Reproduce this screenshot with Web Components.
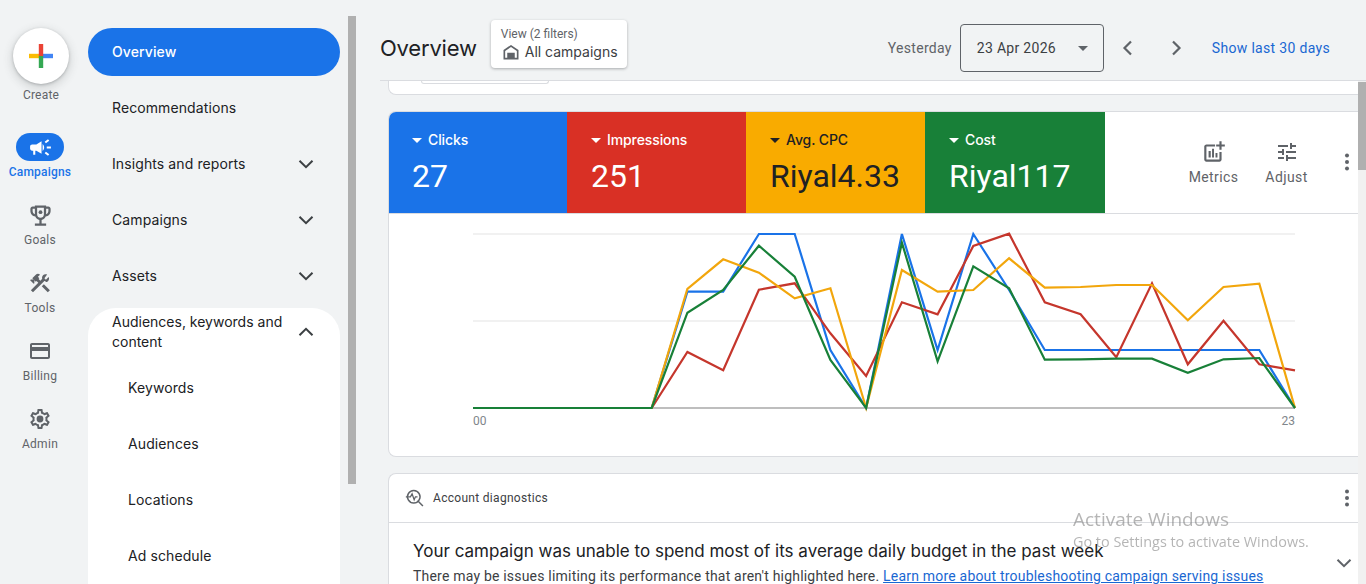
<!DOCTYPE html>
<html>
<head>
<meta charset="utf-8">
<title>Overview</title>
<style>
  html, body { margin: 0; height: 100%; overflow: hidden; background: #f1f3f4; }
  body { font-family: Roboto, "Liberation Sans", sans-serif; color: #202124; }
</style>
</head>
<body>
<ads-app>
  <ads-rail slot="rail">
    <rail-item label="Goals" icon="goals" size="27"></rail-item>
    <rail-item label="Tools" icon="tools"></rail-item>
    <rail-item label="Billing" icon="billing"></rail-item>
    <rail-item label="Admin" icon="admin"></rail-item>
  </ads-rail>
  <ads-nav slot="nav"></ads-nav>
  <page-header slot="header"></page-header>
  <stub-card slot="content"></stub-card>
  <score-card slot="content">
    <metric-tile label="Clicks" value="27" color="#1a73e8" w="178" pad="23"></metric-tile>
    <metric-tile label="Impressions" value="251" color="#d93025"></metric-tile>
    <metric-tile label="Avg. CPC" value="Riyal4.33" color="#f9ab00" dark></metric-tile>
    <metric-tile label="Cost" value="Riyal117" color="#188038" w="180"></metric-tile>
  </score-card>
  <diag-card slot="content"></diag-card>
</ads-app>
<win-watermark></win-watermark>

<script>
// material style icon paths, all on a 24 box
const ICONS = {
  campaigns: '<path d="M18 11v2h4v-2h-4zm-2 6.61c.96.71 2.21 1.65 3.2 2.39.4-.53.8-1.07 1.2-1.6-.99-.74-2.24-1.68-3.2-2.4-.4.54-.8 1.08-1.2 1.61zM20.4 5.6c-.4-.53-.8-1.07-1.2-1.6-.99.74-2.24 1.68-3.2 2.4.4.53.8 1.07 1.2 1.6.96-.72 2.21-1.65 3.2-2.4zM4 9c-1.1 0-2 .9-2 2v2c0 1.1.9 2 2 2h1v4h2v-4h1l5 3V6L8 9H4zm11.5 3c0-1.33-.58-2.53-1.5-3.35v6.69c.92-.81 1.5-2.01 1.5-3.34z"/>',
  goals: '<path fill-rule="evenodd" d="M19 4h-2V3H7v1H5C3.9 4 3 4.9 3 6v2c0 2.55 1.92 4.63 4.39 4.94.63 1.5 1.98 2.63 3.61 2.96V19H7v2h10v-2h-4v-3.1c1.63-.33 2.98-1.46 3.61-2.96C19.08 12.63 21 10.55 21 8V6c0-1.1-.9-2-2-2zM5 8V6h2v4.82C5.84 10.4 5 9.3 5 8zm7 6c-1.65 0-3-1.35-3-3V5h6v6c0 1.65-1.35 3-3 3zm7-6c0 1.3-.84 2.4-2 2.82V6h2v2z"/><circle cx="12" cy="9" r="1.7"/>',
  tools: '<path d="M13.78 15.3l6 6 2.11-2.16-6-6z"/><path d="M17.5 10.1c-.39 0-.81-.05-1.12-.18L5 21.3l-2.11-2.11 7.41-7.4L8.53 10l-.71.7-1.45-1.41v2.86l-.7.7-3.54-3.54.71-.7h2.81L4.25 7.2l3.54-3.54c1.17-1.17 3.07-1.17 4.24 0L9.91 5.78l1.41 1.41-.71.71 1.79 1.79 1.82-1.88c-.13-.31-.19-.73-.19-1.12 0-1.99 1.57-3.54 3.5-3.54.59 0 1.11.14 1.58.42L16.41 7.3l1.5 1.5 2.72-2.68c.28.47.42.97.42 1.58 0 1.93-1.55 3.4-3.55 3.4z"/>',
  billing: '<path d="M20 4H4c-1.11 0-1.99.89-1.99 2L2 18c0 1.11.89 2 2 2h16c1.11 0 2-.89 2-2V6c0-1.11-.89-2-2-2zm0 14H4v-6h16v6zm0-10H4V6h16v2z"/>',
  admin: '<path d="M19.43 12.98c.04-.32.07-.64.07-.98 0-.34-.03-.66-.07-.98l2.11-1.65c.19-.15.24-.42.12-.64l-2-3.46c-.09-.16-.26-.25-.44-.25-.06 0-.12.01-.17.03l-2.49 1c-.52-.4-1.08-.73-1.69-.98l-.38-2.65C14.46 2.18 14.25 2 14 2h-4c-.25 0-.46.18-.49.42l-.38 2.65c-.61.25-1.17.59-1.69.98l-2.49-1c-.06-.02-.12-.03-.18-.03-.17 0-.34.09-.43.25l-2 3.46c-.13.22-.07.49.12.64l2.11 1.65c-.04.32-.07.65-.07.98 0 .33.03.66.07.98l-2.11 1.65c-.19.15-.24.42-.12.64l2 3.46c.09.16.26.25.44.25.06 0 .12-.01.17-.03l2.49-1c.52.4 1.08.73 1.69.98l.38 2.65c.03.24.24.42.49.42h4c.25 0 .46-.18.49-.42l.38-2.65c.61-.25 1.17-.59 1.69-.98l2.49 1c.06.02.12.03.18.03.17 0 .34-.09.43-.25l2-3.46c.12-.22.07-.49-.12-.64l-2.11-1.65zm-1.98-1.71c.04.31.05.52.05.73 0 .21-.02.43-.05.73l-.14 1.13.89.7 1.08.84-.7 1.21-1.27-.51-1.04-.42-.9.68c-.43.32-.84.56-1.25.73l-1.06.43-.16 1.13-.2 1.35h-1.4l-.19-1.35-.16-1.13-1.06-.43c-.43-.18-.83-.41-1.23-.71l-.91-.7-1.06.43-1.27.51-.7-1.21 1.08-.84.89-.7-.14-1.13c-.03-.31-.05-.54-.05-.74s.02-.43.05-.73l.14-1.13-.89-.7-1.08-.84.7-1.21 1.27.51 1.04.42.9-.68c.43-.32.84-.56 1.25-.73l1.06-.43.16-1.13.2-1.35h1.39l.19 1.35.16 1.13 1.06.43c.43.18.83.41 1.23.71l.91.7 1.06-.43 1.27-.51.7 1.21-1.07.85-.89.7.14 1.13z"/><circle cx="12" cy="12" r="3.4"/>',
  metrics: '<path d="M19 12h-2v7H5V7h8V5H5c-1.1 0-2 .9-2 2v12c0 1.1.9 2 2 2h12c1.1 0 2-.9 2-2z"/><path d="M7 11h2v6H7zM10.2 9h1.8v8h-1.8zM13.4 13h1.8v4h-1.8zM19 2h-2v3h-3v2h3v3h2V7h3V5h-3z"/>',
  adjust: '<path d="M3 17v2h6v-2H3zM3 5v2h10V5H3zm10 16v-2h8v-2h-8v-2h-2v6h2zM7 9v2H3v2h4v2h2V9H7zm14 4v-2H11v2h10zm-6-4h2V7h4V5h-4V3h-2v6z"/>',
  dots: '<circle cx="12" cy="5.5" r="2"/><circle cx="12" cy="12" r="2"/><circle cx="12" cy="18.5" r="2"/>',
  house: '<path fill-rule="evenodd" d="M12 3.5L3 9.5V21h18V9.5zM12 6l7 4.7V19h-2.500v-6h-9v6H5v-8.300z"/><path d="M9.500 15h5v4h-5z"/>',
  diag: '<path fill="none" stroke="currentColor" stroke-width="1.8" d="M10.500 3a7.500 7.500 0 1 1-.01 0zM15.800 15.800l5.700 5.700"/><path fill="none" stroke="currentColor" stroke-width="1.5" d="M1 10.500h5.500l2-3.500 2.500 7 1.500-3.500h2.500"/>'
};
const icon = (name, size = 24) => `<svg width="${size}" height="${size}" viewBox="0 0 24 24" fill="currentColor" aria-hidden="true">${ICONS[name]}</svg>`;
const chevron = (d, size = 24, w = 2) => `<svg width="${size}" height="${size}" viewBox="0 0 24 24" fill="none" stroke="currentColor" stroke-width="${w}"><path d="${d}"/></svg>`;
const CH_DOWN = 'M5.5 8.700l6.500 6.500 6.500-6.500';
const CH_UP = 'M5.5 15.300l6.500-6.500 6.500 6.500';

class AdsApp extends HTMLElement {
  constructor() {
    super();
    this.attachShadow({mode: 'open'}).innerHTML = `
      <style>
        :host { display: flex; height: 584px; width: 1366px; overflow: hidden; background: #f1f3f4; }
        .main { flex: 1; min-width: 0; display: flex; flex-direction: column; }
        .scroll { flex: 1; min-height: 0; display: flex; }
        .content { flex: 1; min-width: 0; overflow: hidden; padding-left: 32px; display: flex; flex-direction: column; box-sizing: border-box; }
        .track { width: 8px; background: #f1f1f1; flex: none; }
        .thumb { width: 8px; height: 88px; margin-top: 1px; background: #b0b0b0; }
        .nav-bar { width: 8px; flex: none; margin: 16px 0 0 8px; height: 468px; background: #b0b0b0; }
      </style>
      <slot name="rail"></slot>
      <slot name="nav"></slot>
      <div class="nav-bar"></div>
      <div class="main">
        <slot name="header"></slot>
        <div class="scroll">
          <div class="content"><slot name="content"></slot></div>
          <div class="track"><div class="thumb"></div></div>
        </div>
      </div>`;
  }
}

class AdsRail extends HTMLElement {
  constructor() {
    super();
    this.attachShadow({mode: 'open'}).innerHTML = `
      <style>
        :host { display: flex; flex-direction: column; align-items: center; width: 80px; flex: none; padding: 28px 0 0 0; box-sizing: border-box; font-family: Roboto, sans-serif; }
        .create { width: 56px; height: 56px; margin-left: 2px; border-radius: 50%; background: #fff; box-shadow: 0 1px 3px rgba(60,64,67,.3), 0 3px 8px 2px rgba(60,64,67,.15); display: flex; align-items: center; justify-content: center; }
        .lbl { font-size: 12px; line-height: 16px; color: #5f6368; margin-top: 3px; margin-left: 2px; letter-spacing: .2px; }
        .pill { margin-top: 30px; width: 48px; height: 28px; border-radius: 14px; background: #1a73e8; color: #fff; display: flex; align-items: center; justify-content: center; }
        .active { color: #1a73e8; font-size: 12px; font-weight: 500; line-height: 16px; margin-top: 3px; margin-bottom: 23px; letter-spacing: .2px; }
      </style>
      <div class="create">
        <svg width="24" height="24" viewBox="0 0 24 24">
          <rect x="0" y="9.800" width="12" height="4.400" fill="#fbbc04"/>
          <rect x="12" y="9.800" width="12" height="4.400" fill="#4285f4"/>
          <rect x="9.800" y="0" width="4.400" height="12" fill="#ea4335"/>
          <rect x="9.800" y="12" width="4.400" height="12" fill="#34a853"/>
        </svg>
      </div>
      <div class="lbl">Create</div>
      <div class="pill">${icon('campaigns', 25)}</div>
      <div class="active">Campaigns</div>
      <slot></slot>`;
  }
}

class RailItem extends HTMLElement {
  connectedCallback() {
    const size = this.getAttribute('size') || 24;
    this.attachShadow({mode: 'open'}).innerHTML = `
      <style>
        :host { display: flex; flex-direction: column; align-items: center; height: 68px; color: #5f6368; }
        .ic { height: 24px; margin-bottom: 5px; display: flex; align-items: center; }
        svg { display: block; flex: none; }
        .lbl { font-size: 12px; line-height: 16px; font-family: Roboto, sans-serif; letter-spacing: .3px; }
      </style>
      <div class="ic">${icon(this.getAttribute('icon'), size)}</div>
      <div class="lbl">${this.getAttribute('label')}</div>`;
  }
}

class NavItem extends HTMLElement {
  connectedCallback() {
    const chev = this.getAttribute('chev');
    this.attachShadow({mode: 'open'}).innerHTML = `
      <style>
        :host { display: flex; align-items: center; height: 56px; box-sizing: border-box; padding: 0 22px 2px 24px; font-size: 14px; color: #202124; letter-spacing: .1px; }
        :host([sub]) { padding-left: 40px; }
        :host([active]) { height: 48px; margin: 4px 0; background: #1a73e8; color: #fff; border-radius: 24px; font-weight: 500; }
        :host([head]) { height: 52px; padding-top: 4px; padding-bottom: 8px; line-height: 20px; letter-spacing: 0; }
        .t { flex: 1; }
        svg { display: block; color: #3c4043; margin-bottom: -2px; }
        :host([head]) svg { margin-bottom: 0; }
      </style>
      <div class="t"><slot></slot></div>
      ${chev ? chevron(chev === 'up' ? CH_UP : CH_DOWN) : ''}`;
  }
}

class AdsNav extends HTMLElement {
  constructor() {
    super();
    this.attachShadow({mode: 'open'}).innerHTML = `
      <style>
        :host { display: block; width: 252px; margin-left: 8px; padding-top: 24px; flex: none; font-family: Inter, "Liberation Sans", sans-serif; font-size: 14px; }
        .group { background: #fff; border-radius: 28px 28px 0 0; margin-top: 4px; height: 300px; }
      </style>
      <nav-item active>Overview</nav-item>
      <nav-item>Recommendations</nav-item>
      <nav-item chev="down">Insights and reports</nav-item>
      <nav-item chev="down">Campaigns</nav-item>
      <nav-item chev="down">Assets</nav-item>
      <div class="group">
        <nav-item head chev="up">Audiences, keywords and content</nav-item>
        <nav-item sub>Keywords</nav-item>
        <nav-item sub>Audiences</nav-item>
        <nav-item sub>Locations</nav-item>
        <nav-item sub>Ad schedule</nav-item>
      </div>`;
  }
}

class PageHeader extends HTMLElement {
  constructor() {
    super();
    this.attachShadow({mode: 'open'}).innerHTML = `
      <style>
        :host { display: flex; align-items: center; height: 81px; box-sizing: border-box; flex: none; margin-left: 24px; border-bottom: 1px solid #dadce0; padding-top: 16px; font-family: Inter, "Liberation Sans", sans-serif; }
        h1 { margin: 0; font-size: 22px; font-weight: 400; color: #202124; letter-spacing: -.2px; }
        .view { margin: 0 0 8px 14px; background: #fff; border-radius: 4px; box-shadow: 0 1px 3px rgba(60,64,67,.4); padding: 6px 10px 0 10px; width: 136px; height: 48px; box-sizing: border-box; }
        .view small { display: block; font: 12px/16px Roboto, sans-serif; color: #5f6368; }
        .view div { display: flex; align-items: center; gap: 4px; font-size: 14px; line-height: 20px; color: #3c4043; white-space: nowrap; }
        .view svg { color: #5f6368; flex: none; }
        .right { margin-left: auto; display: flex; align-items: center; font-family: Roboto, sans-serif; }
        .y { font-size: 14px; color: #5f6368; margin-right: 8px; letter-spacing: .3px; }
        .date { width: 144px; height: 48px; box-sizing: border-box; border: 1px solid #5f6368; border-radius: 4px; display: flex; align-items: center; padding: 0 15px 0 16px; font-size: 14px; color: #3c4043; letter-spacing: .3px; }
        .tri { margin-left: auto; width: 0; height: 0; border: 5px solid transparent; border-top-color: #5f6368; border-bottom: 0; }
        .nv { display: flex; width: 48px; justify-content: center; color: #5f6368; }
        .link { margin-left: 12px; margin-right: 36px; color: #1967d2; font-size: 14px; letter-spacing: .32px; }
        svg { display: block; }
      </style>
      <h1>Overview</h1>
      <div class="view">
        <small>View (2 filters)</small>
        <div>${icon('house', 20)}All campaigns</div>
      </div>
      <div class="right">
        <span class="y">Yesterday</span>
        <div class="date">23 Apr 2026<span class="tri"></span></div>
        <span class="nv">${chevron('M15 5.5l-6.500 6.500 6.500 6.500', 24, 2.2)}</span>
        <span class="nv">${chevron('M9 5.5l6.500 6.500-6.500 6.500', 24, 2.2)}</span>
        <a class="link">Show last 30 days</a>
      </div>`;
  }
}

class StubCard extends HTMLElement {
  constructor() {
    super();
    this.attachShadow({mode: 'open'}).innerHTML = `
      <style>
        :host { display: block; flex: none; height: 13px; background: #fff; border: 1px solid #dadce0; border-top: 0; border-right: 0; border-radius: 0 0 0 8px; padding-left: 32px; }
        div { width: 126px; height: 2px; border: 1px solid #dadce0; border-top: 0; border-radius: 0 0 4px 4px; }
      </style>
      <div></div>`;
  }
}

class MetricTile extends HTMLElement {
  connectedCallback() {
    const dark = this.hasAttribute('dark');
    const w = this.getAttribute('w') || 179;
    const pad = this.getAttribute('pad') || 24;
    this.attachShadow({mode: 'open'}).innerHTML = `
      <style>
        :host { display: block; width: ${w}px; height: 101px; box-sizing: border-box; padding: 18px 0 0 ${pad}px; background: ${this.getAttribute('color')}; color: ${dark ? '#202124' : '#fff'}; font-family: Roboto, sans-serif; }
        .l { display: flex; align-items: center; height: 20px; font: 500 14px/20px Inter, sans-serif; letter-spacing: -.1px; }
        .tri { width: 0; height: 0; border: 5px solid transparent; border-top-color: currentColor; border-bottom: 0; margin-right: 6px; }
        .v { font-size: 32px; line-height: 40px; margin-top: 6px; }
      </style>
      <div class="l"><span class="tri"></span>${this.getAttribute('label')}</div>
      <div class="v">${this.getAttribute('value')}</div>`;
  }
}

class PerfChart extends HTMLElement {
  constructor() {
    super();
    const y0 = 20, yb = 194;
    const dx = 822 / 23;
    const zero = [408,408,408,408,408,408];
    const series = [
      ['#1a73e8', [...zero, 291.7,291.7,234,234,350,408,234,350,234,290,350,350,350,350,350,350,350,408]],
      ['#c5362c', [...zero, 352,370.3,289.7,283.3,333.3,376,302.3,314.3,246,233.7,302.3,314.3,357.3,283.3,364.3,320.7,364.3,370.3]],
      ['#f2a60c', [...zero, 289,259.3,272.7,298.3,288.3,408,270,291.7,290,258.3,287.7,287,285,285,320.3,287,283.7,408]],
      ['#188038', [...zero, 312.7,290,245.7,276.7,360,408,242.7,361.3,266.3,288.3,359.7,359.3,358.7,358.7,372.7,359.3,358,408]]
    ];
    const lines = series.map(([c, pts]) => {
      const p = pts.map((v, i) => `${(i * dx + 84).toFixed(1)},${(v - 214).toFixed(1)}`).join(' ');
      return `<polyline points="${p}" fill="none" stroke="${c}" stroke-width="2.2"/>`;
    }).join('');
    this.attachShadow({mode: 'open'}).innerHTML = `
      <style>
        :host { display: block; height: 243px; }
        svg { display: block; }
        text { font: 12px Roboto, sans-serif; fill: #80868b; }
      </style>
      <svg width="970" height="243" viewBox="0 0 970 243">
        <line x1="84" x2="906" y1="${y0}" y2="${y0}" stroke="#ececec" stroke-width="1.5"/>
        <line x1="84" x2="906" y1="107" y2="107" stroke="#ececec" stroke-width="1.5"/>
        <line x1="84" x2="906" y1="${yb}" y2="${yb}" stroke="#a8a8a8" stroke-width="1.5"/>
        ${lines}
        <text x="84" y="211">00</text>
        <text x="906" y="211" text-anchor="end">23</text>
      </svg>`;
  }
}

class ScoreCard extends HTMLElement {
  constructor() {
    super();
    this.attachShadow({mode: 'open'}).innerHTML = `
      <style>
        :host { display: block; flex: none; margin-top: 16px; height: 346px; box-sizing: border-box; background: #fff; border: 1px solid #dadce0; border-right: 0; border-radius: 8px 0 0 8px; overflow: hidden; font-family: Roboto, sans-serif; }
        .top { display: flex; height: 102px; border-bottom: 1px solid #dadce0; box-sizing: border-box; }
        .tiles { display: flex; }
        .acts { flex: 1; display: flex; align-items: flex-start; color: #5f6368; font-size: 14px; letter-spacing: .4px; }
        .a { display: flex; flex-direction: column; align-items: center; padding-top: 28px; gap: 5px; width: 73px; }
        .a svg { display: block; }
        .a .big { margin: -1px 0; }
        .m { margin-left: 72px; }
        .d { margin-left: 12px; padding-top: 38px; }
      </style>
      <div class="top">
        <div class="tiles"><slot></slot></div>
        <div class="acts">
          <div class="a m"><div class="big">${icon('metrics', 26)}</div><span>Metrics</span></div>
          <div class="a">${icon('adjust')}<span>Adjust</span></div>
          <div class="d">${icon('dots')}</div>
        </div>
      </div>
      <perf-chart></perf-chart>`;
  }
}

class DiagCard extends HTMLElement {
  constructor() {
    super();
    this.attachShadow({mode: 'open'}).innerHTML = `
      <style>
        :host { display: block; flex: none; margin-top: 16px; height: 200px; box-sizing: border-box; background: #fff; border: 1px solid #dadce0; border-right: 0; border-radius: 8px 0 0 8px; font-family: Inter, "Liberation Sans", sans-serif; }
        .h { display: flex; align-items: center; height: 49px; box-sizing: border-box; border-bottom: 1px solid #dadce0; padding-left: 16px; font: 12px Roboto, sans-serif; color: #3c4043; letter-spacing: .3px; }
        .h svg { display: block; color: #5f6368; }
        .h span { margin-left: 8px; }
        .h .d { margin-left: auto; margin-right: -1px; color: #5f6368; }
        .b { display: flex; padding: 18px 0 0 24px; }
        .tx { flex: 1; white-space: nowrap; }
        .ti { font-size: 17px; line-height: 20px; color: #202124; }
        .de { font-size: 14px; line-height: 20px; color: #3c4043; margin-top: 5px; font-family: Roboto, sans-serif; letter-spacing: .2px; }
        a { color: #1967d2; text-decoration: underline; }
        .c { color: #5f6368; margin: 10px 2px 0 0; }
      </style>
      <div class="h">${icon('diag', 20)}<span>Account diagnostics</span><div class="d">${icon('dots')}</div></div>
      <div class="b">
        <div class="tx">
          <div class="ti">Your campaign was unable to spend most of its average daily budget in the past week</div>
          <div class="de">There may be issues limiting its performance that aren't highlighted here. <a>Learn more about troubleshooting campaign serving issues</a></div>
        </div>
        <div class="c">${chevron(CH_DOWN)}</div>
      </div>`;
  }
}

class WinWatermark extends HTMLElement {
  constructor() {
    super();
    this.attachShadow({mode: 'open'}).innerHTML = `
      <style>
        :host { position: fixed; left: 1073px; top: 507px; font-family: "Open Sans", sans-serif; color: rgba(120,120,120,.55); pointer-events: none; white-space: nowrap; }
        .a { font-size: 19px; line-height: 24px; }
        .b { font-size: 14.4px; line-height: 20px; margin-top: 1px; }
      </style>
      <div class="a">Activate Windows</div>
      <div class="b">Go to Settings to activate Windows.</div>`;
  }
}

customElements.define('rail-item', RailItem);
customElements.define('ads-rail', AdsRail);
customElements.define('nav-item', NavItem);
customElements.define('ads-nav', AdsNav);
customElements.define('page-header', PageHeader);
customElements.define('stub-card', StubCard);
customElements.define('metric-tile', MetricTile);
customElements.define('perf-chart', PerfChart);
customElements.define('score-card', ScoreCard);
customElements.define('diag-card', DiagCard);
customElements.define('win-watermark', WinWatermark);
customElements.define('ads-app', AdsApp);
</script>
</body>
</html>
